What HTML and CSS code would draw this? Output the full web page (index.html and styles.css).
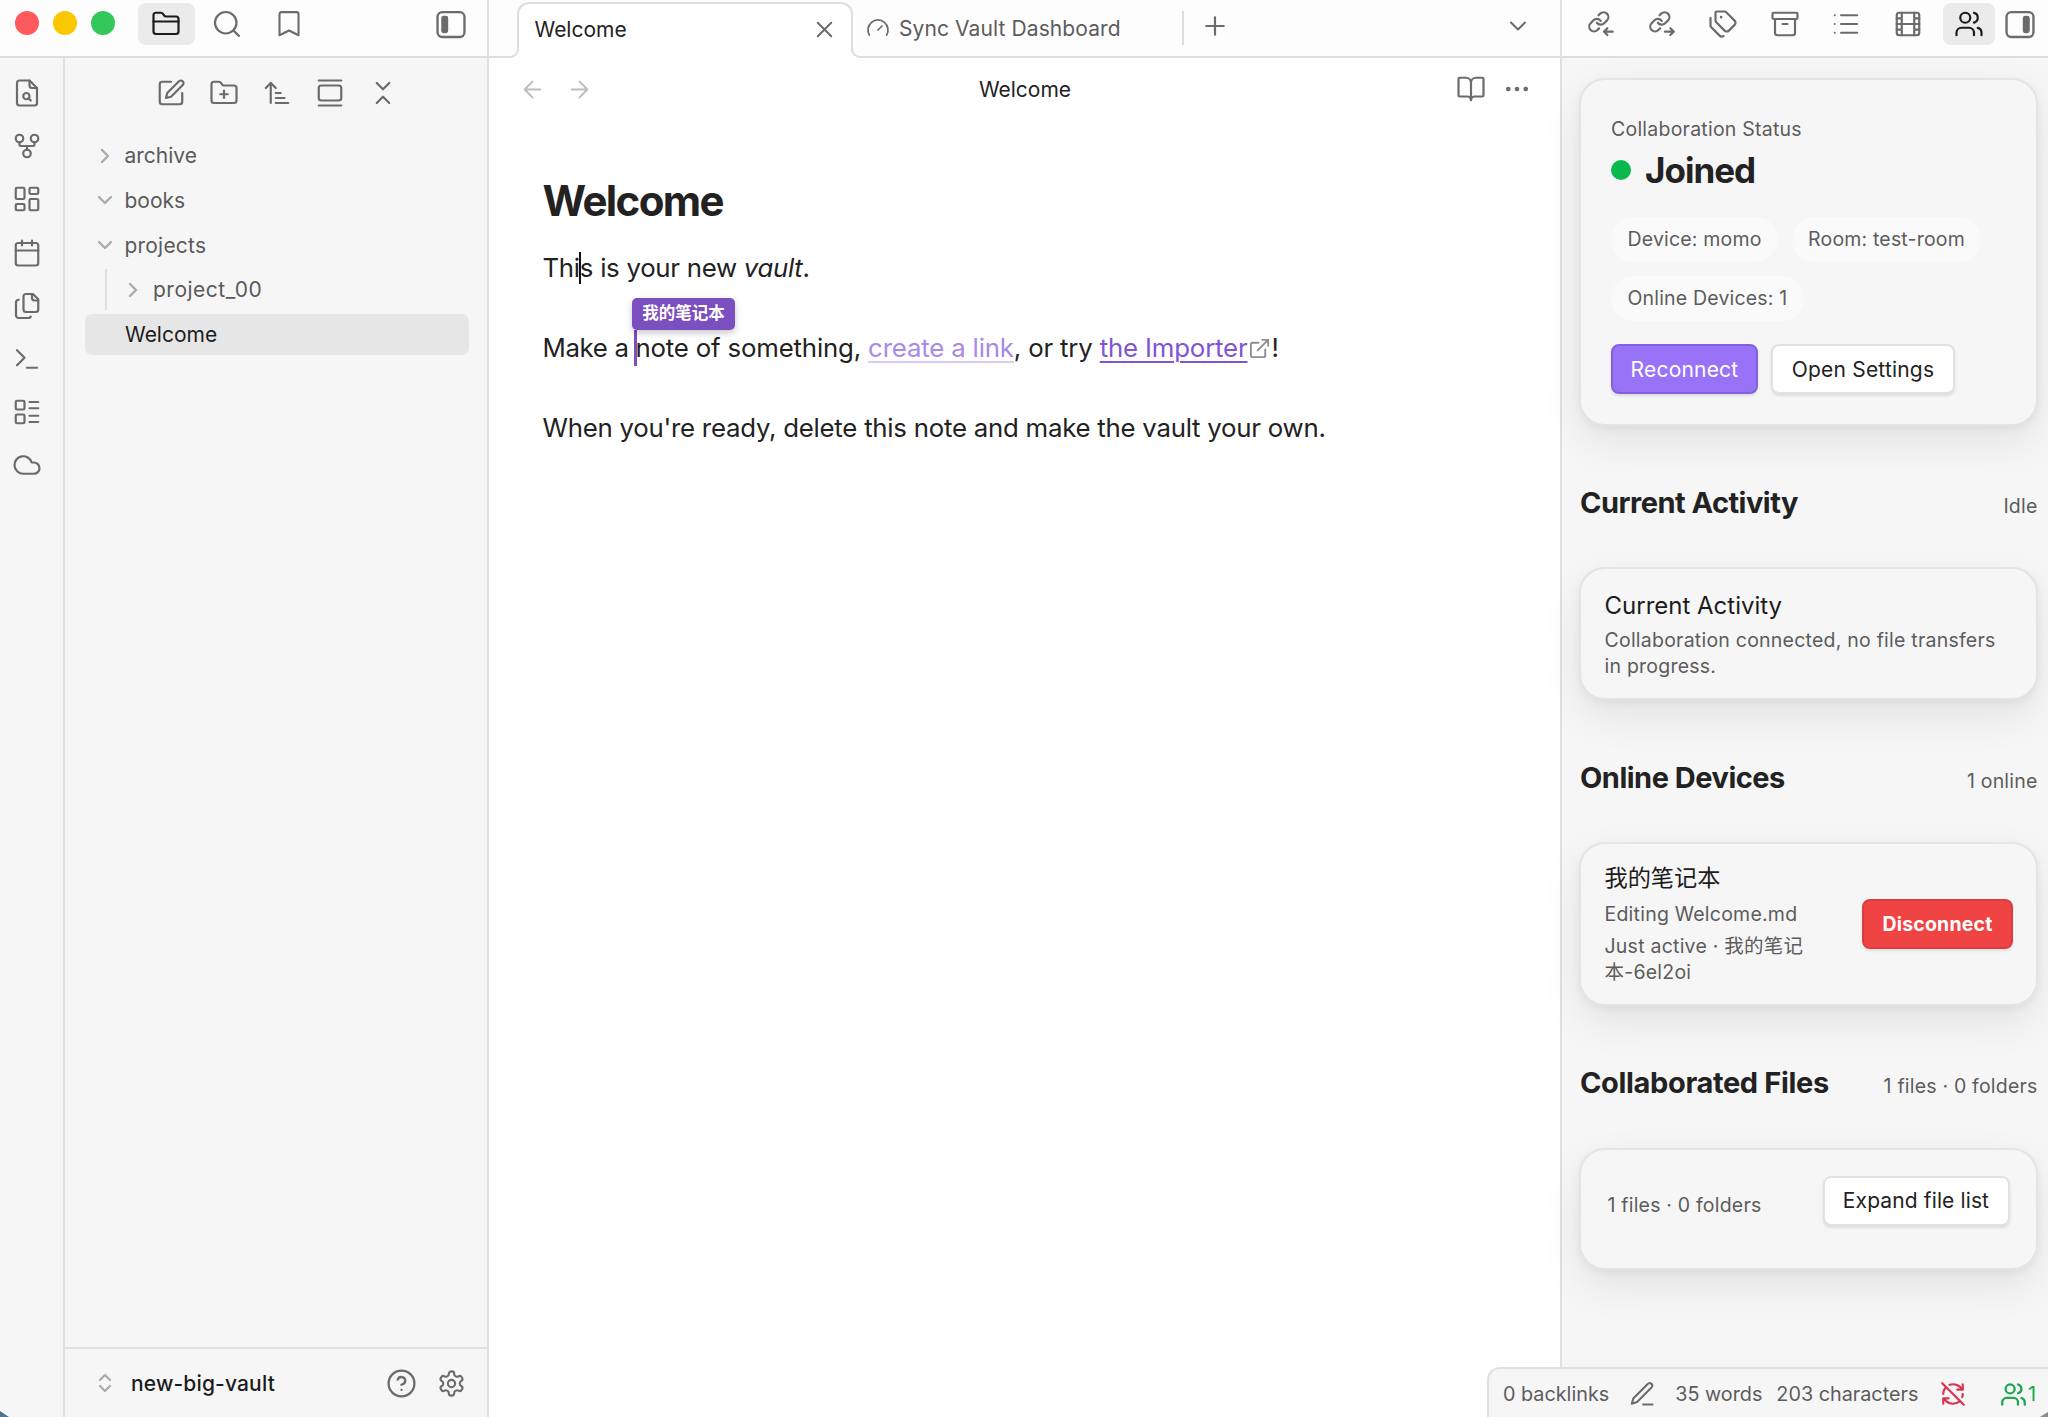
FILE: index.html
```html
<!DOCTYPE html>
<html lang="en">
<head>
<meta charset="utf-8">
<title>Welcome - new-big-vault</title>
<link rel="stylesheet" href="styles.css">
</head>
<body>
<svg class="defs" width="0" height="0">
  <symbol id="folder" viewBox="0 0 24 24"><path d="M20 20a2 2 0 0 0 2-2V8a2 2 0 0 0-2-2h-7.9a2 2 0 0 1-1.69-.9L9.6 3.9A2 2 0 0 0 7.93 3H4a2 2 0 0 0-2 2v13a2 2 0 0 0 2 2Z"/><path d="M2 10h20"/></symbol>
  <symbol id="search" viewBox="0 0 24 24"><circle cx="11" cy="11" r="8.6"/><path d="m21.5 21.5-4.3-4.3"/></symbol>
  <symbol id="bookmark" viewBox="0 0 24 24"><path d="m20 21.5-8-4-8 4V3.5a1.5 1.5 0 0 1 1.5-1.5h13a1.5 1.5 0 0 1 1.5 1.5v18z" transform="translate(.6 .6) scale(.95)"/></symbol>
  <symbol id="panel-left" viewBox="0 0 24 24"><rect x="1.9" y="2.4" width="20.2" height="18.6" rx="3.5"/><rect class="solid" x="5.2" y="5.6" width="4.2" height="12" rx="1.3"/></symbol>
  <symbol id="panel-right" viewBox="0 0 24 24"><rect x="1.9" y="2.4" width="20.2" height="18.6" rx="3.5"/><rect class="solid" x="14.6" y="5.6" width="4.2" height="12" rx="1.3"/></symbol>
  <symbol id="file-search" viewBox="0 0 24 24"><path d="M14 2H6a2 2 0 0 0-2 2v16a2 2 0 0 0 2 2h12a2 2 0 0 0 2-2V8z"/><path d="M14 2v4a2 2 0 0 0 2 2h4"/><circle cx="11.5" cy="14.5" r="2.5"/><path d="M13.3 16.3 15 18"/></symbol>
  <symbol id="graph" viewBox="0 0 24 24"><circle cx="12" cy="18" r="3"/><circle cx="6" cy="6" r="3"/><circle cx="18" cy="6" r="3"/><path d="M18 9v2c0 .6-.4 1-1 1H7c-.6 0-1-.4-1-1V9"/><path d="M12 12v3"/></symbol>
  <symbol id="dashboard" viewBox="0 0 24 24"><rect width="7" height="9" x="3" y="3" rx="1"/><rect width="7" height="5" x="14" y="3" rx="1"/><rect width="7" height="9" x="14" y="12" rx="1"/><rect width="7" height="5" x="3" y="16" rx="1"/></symbol>
  <symbol id="calendar" viewBox="0 0 24 24"><path d="M8 2v4M16 2v4"/><rect width="18" height="18" x="3" y="4" rx="2"/><path d="M3 10h18"/></symbol>
  <symbol id="files" viewBox="0 0 24 24"><path d="M11.2 2.4h5.6L21 6.6v8.2a2 2 0 0 1-2 2h-7.8a2 2 0 0 1-2-2V4.4a2 2 0 0 1 2-2z"/><path d="M21 7.6h-3a2 2 0 0 1-2-2V2.6"/><path d="M5.4 7a2.2 2.2 0 0 0-2.2 2.2v10.2a2.2 2.2 0 0 0 2.2 2.2h7.4a2.4 2.4 0 0 0 2.2-1"/></symbol>
  <symbol id="terminal" viewBox="0 0 24 24"><path d="m4 17 6-6-6-6"/><path d="M12 19h8"/></symbol>
  <symbol id="layout-list" viewBox="0 0 24 24"><rect width="7" height="7" x="3" y="3" rx="1"/><rect width="7" height="7" x="3" y="14" rx="1"/><path d="M14 4h7M14 9h7M14 15h7M14 20h7"/></symbol>
  <symbol id="cloud" viewBox="0 0 24 24"><path d="M17.5 19H9a7 7 0 1 1 6.71-9h1.79a4.5 4.5 0 1 1 0 9Z"/></symbol>
  <symbol id="square-pen" viewBox="0 0 24 24"><path d="M12 3H5a2 2 0 0 0-2 2v14a2 2 0 0 0 2 2h14a2 2 0 0 0 2-2v-7"/><path d="M18.375 2.625a2.121 2.121 0 1 1 3 3L12 15l-4 1 1-4Z"/></symbol>
  <symbol id="folder-plus" viewBox="0 0 24 24"><path d="M12 10v6M9 13h6"/><path d="M20 20a2 2 0 0 0 2-2V8a2 2 0 0 0-2-2h-7.9a2 2 0 0 1-1.69-.9L9.6 3.9A2 2 0 0 0 7.93 3H4a2 2 0 0 0-2 2v13a2 2 0 0 0 2 2Z"/></symbol>
  <symbol id="sort" viewBox="0 0 24 24"><path d="m3 8 4-4 4 4"/><path d="M7 4v16M11 12h4M11 16h7M11 20h10"/></symbol>
  <symbol id="gallery" viewBox="0 0 24 24"><path d="M3 2h18"/><rect width="18" height="12" x="3" y="6" rx="2"/><path d="M3 22h18"/></symbol>
  <symbol id="collapse" viewBox="0 0 24 24"><path d="m7 20 5-5 5 5"/><path d="m7 4 5 5 5-5"/></symbol>
  <symbol id="chev-right" viewBox="0 0 24 24"><path d="m9 18 6-6-6-6"/></symbol>
  <symbol id="chev-down" viewBox="0 0 24 24"><path d="m6 9 6 6 6-6"/></symbol>
  <symbol id="chevs" viewBox="0 0 24 24"><path d="m7 15 5 5 5-5"/><path d="m7 9 5-5 5 5"/></symbol>
  <symbol id="help" viewBox="0 0 24 24"><circle cx="12" cy="12" r="10"/><path d="M9.09 9a3 3 0 0 1 5.83 1c0 2-3 3-3 3"/><path d="M12 17h.01"/></symbol>
  <symbol id="gear" viewBox="0 0 24 24"><path d="M12.22 2h-.44a2 2 0 0 0-2 2v.18a2 2 0 0 1-1 1.73l-.43.25a2 2 0 0 1-2 0l-.15-.08a2 2 0 0 0-2.73.73l-.22.38a2 2 0 0 0 .73 2.73l.15.1a2 2 0 0 1 1 1.72v.51a2 2 0 0 1-1 1.74l-.15.09a2 2 0 0 0-.73 2.73l.22.38a2 2 0 0 0 2.73.73l.15-.08a2 2 0 0 1 2 0l.43.25a2 2 0 0 1 1 1.73V20a2 2 0 0 0 2 2h.44a2 2 0 0 0 2-2v-.18a2 2 0 0 1 1-1.73l.43-.25a2 2 0 0 1 2 0l.15.08a2 2 0 0 0 2.73-.73l.22-.39a2 2 0 0 0-.73-2.73l-.15-.08a2 2 0 0 1-1-1.74v-.5a2 2 0 0 1 1-1.74l.15-.09a2 2 0 0 0 .73-2.73l-.22-.38a2 2 0 0 0-2.73-.73l-.15.08a2 2 0 0 1-2 0l-.43-.25a2 2 0 0 1-1-1.73V4a2 2 0 0 0-2-2z"/><circle cx="12" cy="12" r="3"/></symbol>
  <symbol id="x" viewBox="0 0 24 24"><path d="M18 6 6 18M6 6l12 12"/></symbol>
  <symbol id="plus" viewBox="0 0 24 24"><path d="M5 12h14M12 5v14"/></symbol>
  <symbol id="gauge" viewBox="0 0 24 24"><path d="m12 14 4-4"/><path d="M3.34 19a10 10 0 1 1 17.32 0"/></symbol>
  <symbol id="arrow-left" viewBox="0 0 24 24"><path d="m12 19-7-7 7-7M19 12H5"/></symbol>
  <symbol id="arrow-right" viewBox="0 0 24 24"><path d="M5 12h14M12 5l7 7-7 7"/></symbol>
  <symbol id="book" viewBox="0 0 24 24"><path d="M12 7v14"/><path d="M3 18a1 1 0 0 1-1-1V4a1 1 0 0 1 1-1h5a4 4 0 0 1 4 4 4 4 0 0 1 4-4h5a1 1 0 0 1 1 1v13a1 1 0 0 1-1 1h-6a3 3 0 0 0-3 3 3 3 0 0 0-3-3z"/></symbol>
  <symbol id="dots" viewBox="0 0 24 24"><circle cx="12" cy="12" r="1"/><circle cx="19" cy="12" r="1"/><circle cx="5" cy="12" r="1"/></symbol>
  <symbol id="external" viewBox="0 0 24 24"><path d="M15 3h6v6M10 14 21 3M18 13v6a2 2 0 0 1-2 2H5a2 2 0 0 1-2-2V8a2 2 0 0 1 2-2h6"/></symbol>
  <symbol id="link-in" viewBox="0 0 24 24"><g class="chain" transform="translate(1 1) scale(.77)"><path d="M10 13a5 5 0 0 0 7.54.54l3-3a5 5 0 0 0-7.07-7.07l-1.72 1.71"/><path d="M14 11a5 5 0 0 0-7.54-.54l-3 3a5 5 0 0 0 7.07 7.07l1.71-1.71"/></g><path d="M21.4 18.1h-7M17.1 15.4l-2.7 2.7 2.7 2.7"/></symbol>
  <symbol id="link-out" viewBox="0 0 24 24"><g class="chain" transform="translate(1 1) scale(.77)"><path d="M10 13a5 5 0 0 0 7.54.54l3-3a5 5 0 0 0-7.07-7.07l-1.72 1.71"/><path d="M14 11a5 5 0 0 0-7.54-.54l-3 3a5 5 0 0 0 7.07 7.07l1.71-1.71"/></g><path d="M14.4 18.1h7M18.7 15.4l2.7 2.7-2.7 2.7"/></symbol>
  <symbol id="tags" viewBox="0 0 24 24"><path d="M13.172 2a2 2 0 0 1 1.414.586l6.71 6.71a2.4 2.4 0 0 1 0 3.408l-4.592 4.592a2.4 2.4 0 0 1-3.408 0l-6.71-6.71A2 2 0 0 1 6 9.172V3a1 1 0 0 1 1-1z"/><path d="M2 7v6.172a2 2 0 0 0 .586 1.414l6.71 6.71a2.4 2.4 0 0 0 3.191.193"/><circle class="solid" cx="10.5" cy="6.5" r=".6"/></symbol>
  <symbol id="archive" viewBox="0 0 24 24"><rect width="20" height="5" x="2" y="3" rx="1"/><path d="M4 8v11a2 2 0 0 0 2 2h12a2 2 0 0 0 2-2V8M10 12h4"/></symbol>
  <symbol id="list" viewBox="0 0 24 24"><path d="M3 5h.01M3 12h.01M3 19h.01M8 5h13M8 12h13M8 19h13"/></symbol>
  <symbol id="film" viewBox="0 0 24 24"><rect width="18" height="18" x="3" y="3" rx="2"/><path d="M7 3v18M3 7.5h4M3 12h18M3 16.5h4M17 3v18M17 7.5h4M17 16.5h4"/></symbol>
  <symbol id="users" viewBox="0 0 24 24"><path d="M16 21v-2a4 4 0 0 0-4-4H6a4 4 0 0 0-4 4v2"/><circle cx="9" cy="7" r="4"/><path d="M16 3.13a4 4 0 0 1 0 7.75M22 21v-2a4 4 0 0 0-3-3.87"/></symbol>
  <symbol id="pen-line" viewBox="0 0 24 24"><path d="M13 21h8"/><path d="M16.9 3.5a2.1 2.1 0 0 1 3.4 2.6 2.1 2.1 0 0 1-.4.6L8 18.6a2 2 0 0 1-.9.5l-3.9 1.3 1.2-4a2 2 0 0 1 .5-.9z"/></symbol>
  <symbol id="sync-off" viewBox="0 0 24 24"><path d="M21 8 18.74 5.74A9.75 9.75 0 0 0 12 3c-1.11 0-2.18.19-3.17.53M8 16H3v5M3 12c0-2.5.94-4.78 2.49-6.5M3 16l2.26 2.26A9.75 9.75 0 0 0 12 21c2.49 0 4.74-.94 6.45-2.5M21 12c0 1-.16 2-.5 3M21 3v5h-5M22 22 2 2"/></symbol>
</svg>

<div class="app">
  <header class="titlebar">
    <div class="title-left">
      <div class="lights"><i class="red"></i><i class="yellow"></i><i class="green"></i></div>
      <div class="side-tabs">
        <span class="side-tab active"><svg class="icon"><use href="#folder"/></svg></span>
        <span class="side-tab"><svg class="icon"><use href="#search"/></svg></span>
        <span class="side-tab"><svg class="icon"><use href="#bookmark"/></svg></span>
      </div>
      <svg class="icon toggle"><use href="#panel-left"/></svg>
    </div>
    <div class="title-center">
      <div class="tab-lead"></div>
      <div class="tab"><span>Welcome</span><svg class="icon close"><use href="#x"/></svg></div>
      <div class="tab-rest">
        <svg class="icon gauge"><use href="#gauge"/></svg><span class="inactive-title">Sync Vault Dashboard</span>
        <span class="tab-sep"></span>
        <svg class="icon new-tab"><use href="#plus"/></svg>
        <svg class="icon tab-list"><use href="#chev-down"/></svg>
      </div>
    </div>
    <div class="title-right">
      <span class="r-tab"><svg class="icon"><use href="#link-in"/></svg></span>
      <span class="r-tab"><svg class="icon"><use href="#link-out"/></svg></span>
      <span class="r-tab"><svg class="icon"><use href="#tags"/></svg></span>
      <span class="r-tab"><svg class="icon"><use href="#archive"/></svg></span>
      <span class="r-tab"><svg class="icon thin"><use href="#list"/></svg></span>
      <span class="r-tab"><svg class="icon"><use href="#film"/></svg></span>
      <span class="r-tab active"><svg class="icon"><use href="#users"/></svg></span>
      <svg class="icon toggle-r"><use href="#panel-right"/></svg>
    </div>
  </header>

  <div class="body">
    <nav class="ribbon">
      <svg class="icon"><use href="#file-search"/></svg>
      <svg class="icon"><use href="#graph"/></svg>
      <svg class="icon"><use href="#dashboard"/></svg>
      <svg class="icon"><use href="#calendar"/></svg>
      <svg class="icon"><use href="#files"/></svg>
      <svg class="icon"><use href="#terminal"/></svg>
      <svg class="icon"><use href="#layout-list"/></svg>
      <svg class="icon"><use href="#cloud"/></svg>
      <span class="wallpaper-corner"></span>
    </nav>

    <aside class="explorer">
      <div class="nav-buttons">
        <svg class="icon"><use href="#square-pen"/></svg>
        <svg class="icon"><use href="#folder-plus"/></svg>
        <svg class="icon"><use href="#sort"/></svg>
        <svg class="icon"><use href="#gallery"/></svg>
        <svg class="icon"><use href="#collapse"/></svg>
      </div>
      <div class="tree">
        <div class="item"><svg class="icon chev"><use href="#chev-right"/></svg><span>archive</span></div>
        <div class="item"><svg class="icon chev"><use href="#chev-down"/></svg><span>books</span></div>
        <div class="item"><svg class="icon chev"><use href="#chev-down"/></svg><span class="projects">projects</span></div>
        <div class="children"><div class="item"><svg class="icon chev"><use href="#chev-right"/></svg><span class="project">project_00</span></div></div>
        <div class="item selected"><span>Welcome</span></div>
      </div>
      <div class="vault">
        <svg class="icon chevs"><use href="#chevs"/></svg>
        <span class="vault-name">new-big-vault</span>
        <svg class="icon help"><use href="#help"/></svg>
        <svg class="icon gear"><use href="#gear"/></svg>
      </div>
    </aside>

    <main class="editor">
      <div class="view-header">
        <div class="history"><svg class="icon"><use href="#arrow-left"/></svg><svg class="icon"><use href="#arrow-right"/></svg></div>
        <span class="view-title">Welcome</span>
        <div class="view-actions"><svg class="icon"><use href="#book"/></svg><svg class="icon"><use href="#dots"/></svg></div>
      </div>
      <article class="note">
        <h1>Welcome</h1>
        <p class="p1">Thi<span class="caret"></span>s is your new <em>vault</em>.</p>
        <p class="p2"><span class="lead">Make a </span><span class="peer"><span class="peer-name">我的笔记本</span></span>note of something, <a class="unresolved">create a link</a>, or try <a class="ext">the Importer</a><svg class="icon ext-icon"><use href="#external"/></svg>!</p>
        <p class="p3">When you're ready, delete this note and make the vault your own.</p>
      </article>
    </main>

    <aside class="collab">
      <section class="card status-card">
        <div class="label">Collaboration Status</div>
        <div class="joined"><i class="dot"></i><span>Joined</span></div>
        <div class="chips">
          <span class="chip">Device: momo</span>
          <span class="chip">Room: test-room</span>
          <span class="chip">Online Devices: 1</span>
        </div>
        <div class="actions"><button class="btn primary">Reconnect</button><button class="btn settings">Open Settings</button></div>
      </section>
      <div class="section-head head-activity"><h2>Current Activity</h2><span>Idle</span></div>
      <section class="card activity-card">
        <div class="card-title">Current Activity</div>
        <div class="card-text">Collaboration connected, no file transfers in progress.</div>
      </section>
      <div class="section-head head-devices"><h2>Online Devices</h2><span>1 online</span></div>
      <section class="card device-card">
        <div class="device-info">
          <div class="card-title cjk">我的笔记本</div>
          <div class="card-text">Editing Welcome.md</div>
          <div class="card-text">Just active · 我的笔记<br>本-6el2oi</div>
        </div>
        <button class="btn danger">Disconnect</button>
      </section>
      <div class="section-head head-files"><h2>Collaborated Files</h2><span>1 files · 0 folders</span></div>
      <section class="card files-card">
        <span class="files-count">1 files · 0 folders</span>
        <button class="btn expand">Expand file list</button>
      </section>
    </aside>
  </div>

  <footer class="status-bar">
    <span class="s-back">0 backlinks</span>
    <svg class="icon s-pen"><use href="#pen-line"/></svg>
    <span class="s-words">35 words</span>
    <span class="s-chars">203 characters</span>
    <svg class="icon s-sync"><use href="#sync-off"/></svg>
    <span class="s-users"><svg class="icon"><use href="#users"/></svg>1</span>
    <span class="window-corner"></span>
  </footer>
</div>
</body>
</html>
```
FILE: styles.css
```css
*, *::before, *::after { box-sizing: border-box; }
body {
  margin: 0;
  font-family: Inter, "Noto Sans CJK SC", sans-serif;
  font-size: 21px;
  color: #222;
  background: #fff;
}
.defs { position: absolute; }
.icon {
  width: 30px;
  height: 30px;
  flex: none;
  display: block;
  fill: none;
  stroke: #6b6b6b;
  stroke-width: 1.75;
  stroke-linecap: round;
  stroke-linejoin: round;
}
.solid { fill: #6b6b6b; stroke-width: 1; }
.chain { stroke-width: 2.3; }
.thin { stroke-width: 1.6; }

.app {
  width: 2048px;
  height: 1417px;
  display: flex;
  flex-direction: column;
  position: relative;
  overflow: hidden;
}

/* title bar */
.titlebar { height: 58px; flex: none; display: flex; background: #fdfdfd; }
.title-left {
  width: 489px;
  display: flex;
  align-items: flex-start;
  border-right: 2px solid #e0e0e0;
  border-bottom: 2px solid #dedede;
}
.lights { display: flex; gap: 14px; padding: 11px 0 0 15px; }
.lights i { width: 24px; height: 24px; border-radius: 50%; }
.red { background: #ff5a5f; }
.yellow { background: #fac800; }
.green { background: #34c759; }
.side-tabs { display: flex; gap: 4.3px; margin: 3px 0 0 22.6px; }
.side-tab {
  width: 57px;
  height: 42px;
  border-radius: 8px;
  display: flex;
  align-items: center;
  justify-content: center;
}
.side-tab.active, .r-tab.active { background: #ebebeb; }
.side-tab.active .icon, .r-tab.active .icon { stroke: #1c1c1c; }
.toggle { width: 32px; height: 32px; margin: 9px 20px 0 auto; }

.title-center { flex: 1; display: flex; }
.tab-lead { width: 28px; border-bottom: 2px solid #dedede; }
.tab {
  width: 336px;
  margin-top: 2px;
  border: 2px solid #dedede;
  border-bottom: 0;
  border-radius: 12px 12px 0 0;
  background: #fff;
  display: flex;
  align-items: center;
  padding: 0 13px 4px 15.5px;
  position: relative;
}
/* curved feet joining the tab outline to the bar's bottom line */
.tab::before, .tab::after {
  content: "";
  position: absolute;
  bottom: 0;
  width: 12px;
  height: 12px;
  background: #fdfdfd;
  border-bottom: 2px solid #dedede;
  clip-path: inset(0);
}
.tab::before {
  left: -12px;
  border-right: 2px solid #dedede;
  border-bottom-right-radius: 9px;
  box-shadow: 5px 5px 0 #fff;
}
.tab::after {
  right: -12px;
  border-left: 2px solid #dedede;
  border-bottom-left-radius: 9px;
  box-shadow: -5px 5px 0 #fff;
}
.close { width: 27px; height: 27px; margin-left: auto; }
.tab-rest {
  flex: 1;
  display: flex;
  align-items: center;
  padding-left: 13px;
  border-bottom: 2px solid #dedede;
  color: #5c5c5c;
}
.gauge { width: 24px; height: 24px; margin-right: 9px; }
.inactive-title { letter-spacing: .1px; }
.tab-sep { width: 2px; height: 34px; background: #ddd; margin-left: 61px; }
.new-tab { margin: -4px 0 0 16px; }
.tab-list { margin: -4px 28px 0 auto; width: 28px; height: 28px; }
.title-right {
  width: 488px;
  border-left: 2px solid #e0e0e0;
  border-bottom: 2px solid #dedede;
  display: flex;
  align-items: flex-start;
  padding: 3px 0 0 12.6px;
  gap: 9.4px;
}
.r-tab {
  width: 52px;
  flex: none;
  height: 42px;
  border-radius: 8px;
  display: flex;
  align-items: center;
  justify-content: center;
}
.toggle-r { width: 32px; height: 32px; margin-top: 6px; }

/* columns */
.body { flex: 1; min-height: 0; display: flex; }
.ribbon {
  width: 65px;
  background: #f6f6f6;
  border-right: 2px solid #e0e0e0;
  padding: 20px 0 0 12.4px;
  display: flex;
  flex-direction: column;
  gap: 23.2px;
  position: relative;
}
.wallpaper-corner {
  position: absolute;
  left: 0;
  bottom: 0;
  width: 9px;
  height: 6px;
  background: #4f7391;
  clip-path: polygon(0 0, 100% 100%, 0 100%);
}
.explorer {
  width: 424px;
  background: #f6f6f6;
  border-right: 2px solid #e0e0e0;
  display: flex;
  flex-direction: column;
}
.nav-buttons { display: flex; gap: 23px; padding: 20px 0 0 91.3px; }
.tree { margin: 27px 18px 0 20px; flex: 1; }
.item {
  height: 41px;
  margin-bottom: 3.75px;
  display: flex;
  align-items: center;
  padding-left: 7.5px;
  border-radius: 7px;
  color: #5a5a5a;
}
.chev { width: 24px; height: 24px; stroke: #ababab; stroke-width: 2.4; margin-right: 8px; }
.children { margin: 0 0 3.75px 20px; border-left: 2px solid #dedede; height: 41px; }
.children .item { padding-left: 14px; }
.projects { letter-spacing: .2px; }
.project { letter-spacing: .5px; }
.selected { background: #e6e6e6; color: #1c1c1c; padding-left: 40px; }
.vault {
  height: 70px;
  border-top: 2px solid #e0e0e0;
  display: flex;
  align-items: center;
  padding: 0 21.5px 0 28px;
}
.chevs { width: 24px; height: 24px; stroke: #ababab; stroke-width: 2.2; margin-right: 14px; }
.vault-name { color: #1c1c1c; font-weight: 500; letter-spacing: .15px; }
.help { margin-left: auto; width: 31px; height: 31px; }
.gear { margin-left: 20px; width: 29px; height: 29px; }

/* editor */
.editor { flex: 1; background: #fff; }
.view-header { height: 62px; display: grid; grid-template-columns: 1fr auto 1fr; align-items: center; padding: 0 28.5px 0 29.5px; }
.history { display: flex; gap: 20px; }
.history .icon { width: 27px; height: 27px; stroke: #bdbdbd; }
.view-title { color: #222; }
.view-actions { display: flex; justify-content: flex-end; gap: 16px; }
.note { padding: 52px 0 0 53.5px; font-size: 25.8px; line-height: 40px; }
.note h1 { margin: 0 0 19px; font-size: 42px; line-height: 57px; font-weight: 700; letter-spacing: -1.6px; color: #222; }
.note p { margin: 0 0 40px; display: flex; align-items: center; white-space: pre; }
.p1 { letter-spacing: -.28px; }
.p2 { letter-spacing: -.17px; }
.lead { letter-spacing: -.35px; }
.p3 { letter-spacing: -.24px; }
.caret { width: 2px; height: 32px; background: #111; margin: 0 -1px; }
.peer { width: 3px; height: 36px; background: #7b4fc0; margin: 0 -1.5px; position: relative; }
.peer-name {
  position: absolute;
  left: -2px;
  bottom: 36px;
  height: 32px;
  width: 103px;
  text-align: center;
  border-radius: 5px;
  background: #7b4fc0;
  color: #fff;
  font-size: 16.5px;
  letter-spacing: 0;
  line-height: 31px;
  font-weight: 700;
  box-shadow: 0 3px 7px rgba(0, 0, 0, .22);
}
.note a { text-decoration: underline; text-decoration-thickness: 2px; text-underline-offset: 4px; }
.note .unresolved { color: #a98ae8; text-decoration-color: #d9cbf6; }
.ext { color: #7f54d6; }
.ext-icon { width: 23px; height: 23px; margin-right: 1px; stroke: #8f8f8f; stroke-width: 2; }

/* collaboration panel */
.collab {
  width: 488px;
  background: #f6f6f6;
  border-left: 2px solid #e0e0e0;
  padding: 20px 10.5px 0 17px;
  color: #5c5c5c;
}
.card {
  border: 2px solid #e4e4e4;
  border-radius: 26px;
  background: #f6f6f6;
  box-shadow: 0 16px 40px rgba(0, 0, 0, .08), 0 3px 8px rgba(0, 0, 0, .05);
}
.status-card { height: 348px; padding: 35px 28px 0 30px; }
.label { font-size: 19.5px; line-height: 28px; letter-spacing: .23px; }
.joined { display: flex; align-items: center; gap: 14px; height: 54px; color: #222; font-size: 35px; font-weight: 700; letter-spacing: -1px; }
.dot { width: 20px; height: 20px; border-radius: 50%; background: #08b94e; }
.chips { display: flex; flex-wrap: wrap; gap: 14px 13.5px; margin-top: 20px; }
.chip { height: 45px; border-radius: 23px; background: #fafafa; padding: 0 16.5px; line-height: 45px; font-size: 19.5px; letter-spacing: .18px; white-space: nowrap; }
.actions { display: flex; gap: 13px; margin-top: 23px; }
.btn {
  height: 50px;
  border-radius: 8px;
  border: 2px solid #e2e2e2;
  background: #fff;
  color: #222;
  padding: 0;
  font: inherit;
  font-size: 21px;
  letter-spacing: .2px;
  white-space: nowrap;
  box-shadow: 0 2px 3px rgba(0, 0, 0, .1);
}
.primary { width: 147px; background: #9873f7; border-color: #8361dc; color: #fff; }
.settings { width: 184px; }
.section-head { display: flex; justify-content: space-between; align-items: baseline; height: 40px; padding-left: 1px; }
.section-head h2 { margin: 0; font-size: 29px; line-height: 40px; font-weight: 700; color: #222; letter-spacing: -.5px; }
.section-head span { font-size: 19.5px; letter-spacing: .2px; }
.head-activity { margin: 56.5px 0 44.5px; }
.head-devices { margin: 57.5px 0 44.5px; }
.head-files { margin: 57px 0 44.5px; }
.section-head.head-files h2 { letter-spacing: -.35px; }
.activity-card { height: 133px; padding: 20px 35px 0 23.5px; }
.card-title { font-size: 24px; line-height: 33px; color: #1c1c1c; }
.card-text { font-size: 19.5px; line-height: 26px; margin-top: 6px; letter-spacing: .23px; }
.activity-card .card-text { margin-top: 5px; }
.device-card { height: 164px; padding: 18px 22.5px 0 23.5px; display: flex; justify-content: space-between; }
.card-title.cjk { font-size: 23.2px; }
.danger { width: 151px; background: #f04343; border-color: #d93f3f; color: #fff; font-weight: 700; font-size: 19.5px; margin-top: 37px; }
.files-card { height: 122px; padding: 26px 26px 0 26.5px; display: flex; justify-content: space-between; }
.files-count { font-size: 19.5px; line-height: 28px; margin-top: 15px; letter-spacing: .2px; }
.expand { width: 187px; letter-spacing: .12px; }

/* status bar */
.status-bar {
  position: absolute;
  right: 0;
  bottom: 0;
  width: 561px;
  height: 50px;
  border: 2px solid #e0e0e0;
  border-right: 0;
  border-bottom: 0;
  border-top-left-radius: 13px;
  background: #f6f6f6;
  color: #5c5c5c;
  font-size: 19.8px;
  display: flex;
  align-items: center;
  padding: 2px 12px 0 14px;
}
.status-bar span { white-space: nowrap; }
.s-pen { width: 28px; height: 28px; margin-left: 19px; }
.s-words { margin-left: 19px; }
.s-chars { margin-left: 14px; }
.s-sync { width: 26px; height: 26px; stroke: #dc3250; stroke-width: 2; margin-left: 21.5px; }
.s-users { margin-left: auto; display: flex; align-items: center; gap: 1px; color: #1aa750; }
.s-users .icon { width: 27px; height: 27px; stroke: #1aa750; stroke-width: 2; }
.window-corner {
  position: absolute;
  right: 0;
  bottom: 0;
  width: 8px;
  height: 5px;
  background: #8a8a8a;
  clip-path: polygon(100% 0, 100% 100%, 0 100%);
}
```
